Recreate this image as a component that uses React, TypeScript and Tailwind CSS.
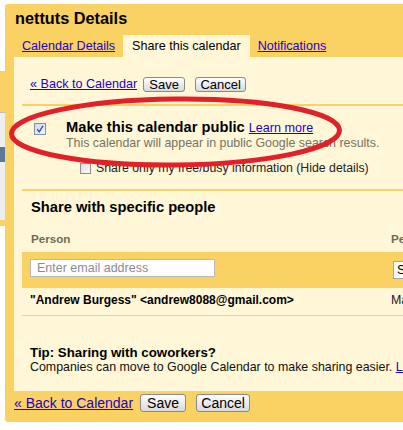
import React from "react";

function Btn({ label, w, h, size }: { label: string; w: string; h: string; size: string }) {
  return (
    <button
      className={`${w} ${h} ${size} shrink-0 flex items-center justify-center rounded-[3px] border border-[#8a8a8a] bg-linear-to-b from-[#ffffff] to-[#d9d9d9] text-black leading-none`}
    >
      {label}
    </button>
  );
}

function CheckedBox() {
  return (
    <svg width="12" height="12" viewBox="0 0 12 12" className="shrink-0 block">
      <defs>
        <linearGradient id="cbg" x1="0" y1="0" x2="1" y2="1">
          <stop offset="0" stopColor="#cfd6ea" />
          <stop offset="1" stopColor="#f3f5fb" />
        </linearGradient>
      </defs>
      <rect x="0.5" y="0.5" width="11" height="11" fill="url(#cbg)" stroke="#7f8fac" />
      <path d="M3.2 6.2 L5.2 8.8 L9 2.8" fill="none" stroke="#2f45b5" strokeWidth="1.3" />
    </svg>
  );
}

function EmptyBox() {
  return (
    <svg width="11" height="11" viewBox="0 0 11 11" className="shrink-0 block">
      <defs>
        <linearGradient id="ebg" x1="0" y1="0" x2="1" y2="1">
          <stop offset="0" stopColor="#dcdcdc" />
          <stop offset="1" stopColor="#fbfbfb" />
        </linearGradient>
      </defs>
      <rect x="0.5" y="0.5" width="10" height="10" fill="url(#ebg)" stroke="#8e8e8e" />
    </svg>
  );
}

export default function App() {
  return (
    <div className="relative w-[403px] h-[430px] overflow-hidden bg-white flex font-['Liberation_Sans',Arial,sans-serif] text-black">
      {/* underlying page strip */}
      <div className="w-[5px] shrink-0 flex flex-col">
        <div className="h-[71px] bg-white" />
        <div className="h-[41px] bg-[#fad163]" />
        <div className="h-[35px] bg-[#eceef2] border-t border-[#b7bec9]" />
        <div className="h-[15px] bg-[#5b7799]" />
        <div className="h-[58px] bg-[#eceef2]" />
        <div className="h-[6px] bg-[#fad163]" />
        <div className="flex-1 bg-white" />
      </div>

      {/* dialog panel */}
      <div className="mt-[4px] h-[418px] w-[440px] shrink-0 rounded-l-[3px] bg-[#fad163] flex flex-col">
        <div className="h-[31px] pl-[10px] text-[16.3px] font-bold leading-[29px]">nettuts Details</div>

        <div className="h-[22px] flex pl-[9px] text-[12.6px] leading-[22px]">
          <a className="px-[8px] text-[#2200cc] underline">Calendar Details</a>
          <span className="px-[9px] bg-[#fff7d7]">Share this calendar</span>
          <a className="px-[8px] text-[#2200cc] underline">Notifications</a>
        </div>

        <div className="ml-[9px] h-[334px] bg-[#fff7d7] flex flex-col pl-[8px] overflow-hidden">
          {/* top actions */}
          <div className="h-[47px] pt-[20px] pl-[8px] flex items-start">
            <div className="h-[15px] flex items-center">
              <a className="text-[12.6px] leading-[15px] text-[#2200cc] underline whitespace-nowrap">« Back to Calendar</a>
              <div className="ml-[6px]">
                <Btn label="Save" w="w-[42px]" h="h-[15px]" size="text-[13px]" />
              </div>
              <div className="ml-[10px]">
                <Btn label="Cancel" w="w-[51px]" h="h-[15px]" size="text-[13px]" />
              </div>
            </div>
          </div>

          <div className="h-[2px] bg-[#fad163]" />

          {/* public section */}
          <div className="h-[83px] flex">
            <div className="ml-[12px] mt-[17px]">
              <CheckedBox />
            </div>
            <div className="ml-[20px] pt-[14px] flex flex-col whitespace-nowrap">
              <div className="flex items-baseline leading-[15px]">
                <span className="text-[14.7px] font-bold">Make this calendar public</span>
                <a className="ml-[4px] text-[12.6px] text-[#2200cc] underline">Learn more</a>
              </div>
              <div className="text-[12.4px] leading-[15px] text-[#77735f]">
                This calendar will appear in public Google search results.
              </div>
              <div className="mt-[10px] ml-[14px] h-[15px] flex items-center">
                <EmptyBox />
                <span className="ml-[5px] text-[12.3px] leading-[15px] text-[#222]">
                  Share only my free/busy information (Hide details)
                </span>
              </div>
            </div>
          </div>

          <div className="h-[2px] bg-[#fad163]" />

          {/* share section */}
          <div className="flex flex-col whitespace-nowrap">
            <div className="pl-[9px] pt-[7px] text-[14.7px] font-bold leading-[18px]">Share with specific people</div>

            <div className="mt-[16px] grid grid-cols-[369px_1fr] text-[11.6px] font-bold leading-[14px] text-[#6e6a56]">
              <div className="pl-[9px]">Person</div>
              <div>Permission Settings</div>
            </div>

            <div className="mt-[6px] h-[36px] bg-[#fad163] grid grid-cols-[369px_1fr]">
              <div className="pl-[8px] pt-[7px]">
                <div className="w-[185px] h-[18px] bg-white border border-[#b9b9b9] pl-[6px] text-[12.5px] leading-[16px] text-[#8c8c8c]">
                  Enter email address
                </div>
              </div>
              <div className="pl-[2px] pt-[9px]">
                <div className="w-[120px] h-[18px] bg-white border border-[#a5a5a5] pl-[3px] text-[12.5px] leading-[16px]">
                  See all event details
                </div>
              </div>
            </div>

            <div className="h-[27px] grid grid-cols-[369px_1fr]">
              <div className="pl-[8px] pt-[5px] text-[12px] font-bold leading-[14px]">
                "Andrew Burgess" &lt;andrew8088@gmail.com&gt;
              </div>
              <div className="pt-[5px] text-[12.4px] leading-[14px] text-[#222]">Make changes to events</div>
            </div>

            <div className="h-[1px] bg-[#fad163]" />

            <div className="mt-[29px] pl-[8px] text-[13.3px] font-bold leading-[15px]">Tip: Sharing with coworkers?</div>
            <div className="pl-[8px] text-[12.4px] leading-[15px] text-[#111]">
              Companies can move to Google Calendar to make sharing easier.{" "}
              <a className="text-[#2200cc] underline">Learn how</a>
            </div>
          </div>
        </div>

        {/* bottom actions */}
        <div className="h-[31px] pl-[9px] pt-[3px] flex items-start">
          <div className="h-[18px] flex items-center">
            <a className="text-[14px] leading-[18px] text-[#2200cc] underline whitespace-nowrap">« Back to Calendar</a>
            <div className="ml-[7px]">
              <Btn label="Save" w="w-[46px]" h="h-[18px]" size="text-[14px]" />
            </div>
            <div className="ml-[10px]">
              <Btn label="Cancel" w="w-[54px]" h="h-[18px]" size="text-[14px]" />
            </div>
          </div>
        </div>
      </div>

      {/* red hand-drawn annotation ellipse */}
      <svg
        className="absolute left-0 top-0 pointer-events-none"
        width="403"
        height="430"
        viewBox="0 0 403 430"
      >
        <ellipse
          cx="175.5"
          cy="132"
          rx="164"
          ry="33"
          fill="none"
          stroke="#e2202a"
          strokeWidth="5"
          transform="rotate(-0.6 175.5 132)"
        />
      </svg>
    </div>
  );
}
